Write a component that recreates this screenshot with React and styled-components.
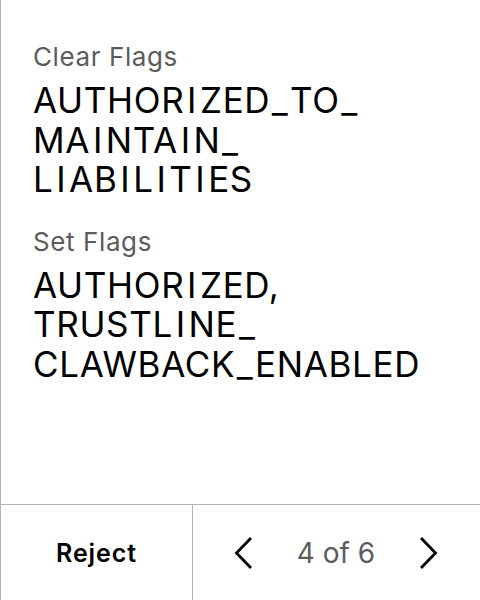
import React from 'react'
import styled, { createGlobalStyle } from 'styled-components'

const GlobalStyle = createGlobalStyle`
  html, body {
    margin: 0;
    padding: 0;
    background: #fff;
  }
  body {
    font-family: Inter, "Noto Sans", sans-serif;
    color: #000;
  }
`

const flags = [
  { label: 'Clear Flags', lines: ['AUTHORIZED_TO_', 'MAINTAIN_', 'LIABILITIES'] },
  { label: 'Set Flags', lines: ['AUTHORIZED,', 'TRUSTLINE_', 'CLAWBACK_ENABLED'] },
]

// the device font draws I and _ wider than Inter does
const glyphPad = { I: 2.8, _: 1.6 }

const renderLine = (line) =>
  line.split(/([I_])/).filter(Boolean).map((part, i) =>
    glyphPad[part] ? (
      <Glyph key={i} $pad={glyphPad[part]}>{part}</Glyph>
    ) : (
      part
    )
  )

const ChevronLeft = () => (
  <svg width="18" height="32" viewBox="0 0 18 32" fill="none">
    <path d="M16 2 L2.5 16 L16 30" stroke="#000" strokeWidth="2.8" strokeLinecap="square" strokeLinejoin="miter" />
  </svg>
)

const ChevronRight = () => (
  <svg width="18" height="32" viewBox="0 0 18 32" fill="none">
    <path d="M2 2 L15.5 16 L2 30" stroke="#000" strokeWidth="2.8" strokeLinecap="square" strokeLinejoin="miter" />
  </svg>
)

export default function App() {
  return (
    <>
      <GlobalStyle />
      <Screen>
        <Content>
          {flags.map((f) => (
            <Field key={f.label}>
              <Label>{f.label}</Label>
              <Value>
                {f.lines.map((l) => (
                  <div key={l}>{renderLine(l)}</div>
                ))}
              </Value>
            </Field>
          ))}
        </Content>
        <Footer>
          <RejectButton>Reject</RejectButton>
          <Pager>
            <NavButton aria-label="Previous"><ChevronLeft /></NavButton>
            <PageCount>4 of 6</PageCount>
            <NavButton aria-label="Next"><ChevronRight /></NavButton>
          </Pager>
        </Footer>
      </Screen>
    </>
  )
}

const Screen = styled.div`
  width: 480px;
  height: 600px;
  box-sizing: border-box;
  border-left: 1px solid #b3b3b3;
  display: flex;
  flex-direction: column;
`

const Content = styled.div`
  flex: 1;
  padding: 41px 0 0 32px;
  display: flex;
  flex-direction: column;
  gap: 26px;
`

const Field = styled.div`
  display: flex;
  flex-direction: column;
  gap: 8px;
`

const Label = styled.div`
  font-size: 26px;
  line-height: 32px;
  letter-spacing: 0.6px;
  color: #5c5c5c;
`

const Value = styled.div`
  font-size: 35px;
  line-height: 39.5px;
  letter-spacing: 0.65px;
  color: #000;
  white-space: nowrap;
`

const Glyph = styled.span`
  padding: 0 ${(p) => p.$pad}px;
`

const Footer = styled.div`
  height: 95px;
  border-top: 1px solid #b3b3b3;
  display: grid;
  grid-template-columns: 192px 1fr;
`

const RejectButton = styled.button`
  border: none;
  border-right: 1px solid #b3b3b3;
  background: none;
  font-family: inherit;
  font-size: 25px;
  font-weight: 600;
  letter-spacing: 0.9px;
  color: #000;
  padding: 0;
`

const Pager = styled.div`
  display: flex;
  align-items: center;
  justify-content: space-between;
  padding: 0 42px 0 41px;
`

const NavButton = styled.button`
  border: none;
  background: none;
  padding: 0;
  display: flex;
  align-items: center;
`

const PageCount = styled.div`
  font-size: 28px;
  color: #5c5c5c;
`
